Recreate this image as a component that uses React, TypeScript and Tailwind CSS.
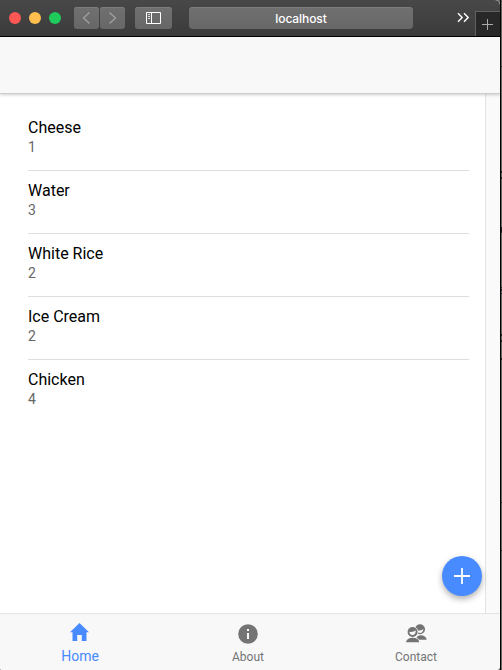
const items = [
  { name: 'Cheese', count: 1 },
  { name: 'Water', count: 3 },
  { name: 'White Rice', count: 2 },
  { name: 'Ice Cream', count: 2 },
  { name: 'Chicken', count: 4 },
];

// Fragments of the window behind that show past the right edge: [top, height]
const slivers = [
  [66, 1], [171, 2], [177, 2], [227, 6], [287, 1], [289, 2], [293, 1],
  [334, 2], [340, 2], [358, 2], [502, 1], [550, 1],
];

function Toolbar() {
  const button =
    'flex h-[22px] items-center justify-center bg-gradient-to-b from-[#707070] to-[#676767] shadow-[inset_0_1px_0_#7c7c7c]';
  return (
    <div className="flex h-[37px] shrink-0 items-start rounded-tr-[5px] border-b border-black bg-gradient-to-b from-[#484848] to-[#3b3b3b]">
      <div className="mt-3 ml-[9px] flex gap-2">
        <span className="size-3 rounded-full bg-[#ff5754]" />
        <span className="size-3 rounded-full bg-[#ffbf4f]" />
        <span className="size-3 rounded-full bg-[#1fcb5a]" />
      </div>
      <div className="mt-[7px] ml-[13px] flex gap-px">
        <span className={`${button} w-[25px] rounded-[3px]`}>
          <svg width="25" height="22" fill="none" stroke="#a0a0a0" strokeWidth="1.3">
            <path d="M15.5 5.5 9.5 11l6 5.5" />
          </svg>
        </span>
        <span className={`${button} w-[25px] rounded-[3px]`}>
          <svg width="25" height="22" fill="none" stroke="#a0a0a0" strokeWidth="1.3">
            <path d="m9.5 5.5 6 5.5-6 5.5" />
          </svg>
        </span>
      </div>
      <span className={`${button} mt-[7px] ml-[10px] w-[37px] rounded-[3px]`}>
        <svg width="15" height="12" fill="none" stroke="#fff">
          <path d="M.5.5h14v11H.5zM5.5.5v11" />
          <path d="M2 2.500h2M2 4.500h2M2 6.500h2" stroke="#ddd" />
        </svg>
      </span>
      <div className={`${button} mt-[7px] ml-[17px] w-[224px] rounded-[4px] pt-px font-[Inter,sans-serif] text-[12px] font-medium tracking-[-0.1px] text-white`}>
        localhost
      </div>
      <svg className="mt-[12px] ml-[44px]" width="12" height="11" fill="none" stroke="#fff" strokeWidth="1.4">
        <path d="m1 1.3 4.2 4.2L1 9.7M7 1.3l4.2 4.2L7 9.7" />
      </svg>
      <span className="mt-[11px] ml-[6px] flex h-[25px] w-[25px] items-start border-t border-l border-[#616161] bg-[#282828]">
        <svg width="24" height="24" stroke="#aaa">
          <path d="M6 12.5h11M11.5 7v11" />
        </svg>
      </span>
    </div>
  );
}

function HomeIcon() {
  return (
    <svg width="20" height="18" viewBox="0 0 20 18" fill="#488aff">
      <path d="M7.2 18v-6h4.600v6h4.700V9.200H19L9.500 0 0 9.200h2.500V18z" />
    </svg>
  );
}

function InfoIcon() {
  return (
    <svg width="20" height="20" viewBox="0 0 20 20">
      <circle cx="10" cy="10" r="9.8" fill="#747474" />
      <path d="M9 5h2v2H9zM9 9h2v6H9z" fill="#f8f8f8" />
    </svg>
  );
}

function ContactsIcon() {
  return (
    <svg width="21" height="19" viewBox="0 0 21 19" fill="#747474">
      <circle cx="14" cy="5.2" r="5" />
      <path d="M10 16c.1-2.800 2-4.700 4.700-4.700 3.300 0 5.600 1.700 6 4.400H10z" />
      <path d="M10.900 6.300c1.800.5 4.600.1 6.500-1.300-.2 2.200-1.500 4-3.300 4-1.600 0-2.800-1.100-3.200-2.700z" fill="#f8f8f8" />
      <circle cx="6.600" cy="8" r="5.700" fill="#f8f8f8" />
      <path d="M0 19c0-3.700 2.700-6 6.800-6s7 2.300 7 6z" fill="#f8f8f8" />
      <circle cx="6.600" cy="8" r="5" />
      <path d="M3.200 7.800c2 .6 4.800.1 6.700-1.200-.1 2.700-1.400 4.500-3.200 4.500-1.900 0-3.200-1.300-3.500-3.300z" fill="#f8f8f8" />
      <path d="M0 18.300c.4-3 2.800-4.600 6.700-4.600s6.200 1.600 6.600 4.600z" />
    </svg>
  );
}

export default function App() {
  return (
    <div className="relative flex h-[670px] w-[502px] overflow-hidden bg-[#686864] font-[Roboto,sans-serif]">
      <div className="flex w-[500px] shrink-0 flex-col overflow-hidden rounded-tr-[5px] rounded-br-[4px] rounded-bl-[2px] bg-white">
        <Toolbar />
        <header className="relative z-10 h-14 shrink-0 bg-[#f8f8f8] shadow-[0_1px_0_#cdcdcd,0_2px_3px_#00000030]" />
        <div className="flex min-h-0 flex-1">
          <ul className="w-[485px] pt-[15px] pr-4 pl-7">
            {items.map((item) => (
              <li key={item.name} className="h-[63px] border-b border-[#dedede] pt-[10px] last:border-transparent">
                <h2 className="text-[16px] leading-[19px] text-black">{item.name}</h2>
                <p className="mt-px text-[14px] leading-[18px] text-[#666]">{item.count}</p>
              </li>
            ))}
          </ul>
          <div className="w-[15px] border-l border-[#e3e3e3] bg-[#fafafa]" />
        </div>
        <nav className="-ml-1 flex h-[57px] w-[504px] shrink-0 border-t border-[#e4e4e4] bg-[#f8f8f8] text-[12px] leading-[14px] text-[#747474]">
          <a className="flex w-[168px] flex-col items-center pt-[9px] text-[14px] text-[#488aff]">
            <HomeIcon />
            <span className="mt-[8px]">Home</span>
          </a>
          <a className="flex w-[168px] flex-col items-center pt-[10px]">
            <InfoIcon />
            <span className="mt-[6px]">About</span>
          </a>
          <a className="flex w-[168px] flex-col items-center pt-[10px]">
            <ContactsIcon />
            <span className="mt-[7px]">Contact</span>
          </a>
        </nav>
      </div>
      <div className="w-px bg-black" />
      {slivers.map(([top, height]) => (
        <i key={top} className="absolute right-0 w-px bg-[#222]" style={{ top, height }} />
      ))}
      <button className="absolute top-[556px] left-[442px] flex size-10 items-center justify-center rounded-full bg-[#488aff] shadow-[0_3px_6px_#00000050]">
        <svg width="16" height="16" stroke="#fff" strokeWidth="1.8">
          <path d="M0 8h16M8 0v16" />
        </svg>
      </button>
    </div>
  );
}
